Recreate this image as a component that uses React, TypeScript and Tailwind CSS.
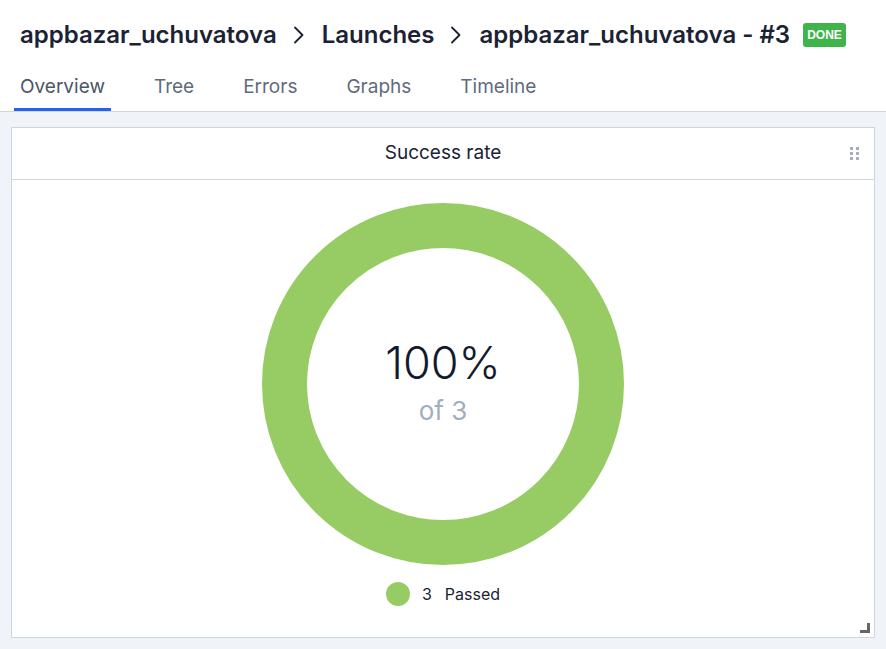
import React from 'react';

const tabs = ['Overview', 'Tree', 'Errors', 'Graphs', 'Timeline'];

function Chevron() {
  return (
    <svg width="12" height="18" viewBox="0 0 12 18" fill="none" stroke="#1b2233" strokeWidth="1.8" strokeLinecap="round" strokeLinejoin="round" className="ml-[16px] mr-[17px]">
      <path d="M2 1.5l7.5 7.5-7.5 7.5" />
    </svg>
  );
}

function Donut() {
  // ring between r=136 and r=181
  return (
    <svg width="364" height="364" viewBox="0 0 364 364">
      <circle cx="182" cy="182" r="158.5" fill="none" stroke="#97cc64" strokeWidth="45" />
    </svg>
  );
}

export default function App() {
  return (
    <div className="w-[886px] h-[649px] bg-[#f0f3f8] flex flex-col font-['Inter',sans-serif] overflow-hidden">
      {/* Header */}
      <header className="bg-white border-b border-[#cfd6e0]">
        <div className="flex items-center h-[67px] pl-5 pt-[2px] text-[24px] font-semibold text-[#1b2233]">
          <span>appbazar_uchuvatova</span>
          <Chevron />
          <span>Launches</span>
          <Chevron />
          <span>appbazar_uchuvatova - #3</span>
          <span className="ml-[13px] bg-[#3fb44a] text-white text-[12px] font-['Liberation_Sans',sans-serif] font-bold leading-[24px] h-[24px] px-[4px] rounded-[3px]">DONE</span>
        </div>
        <nav className="flex gap-[37px] pl-[14px]">
          {tabs.map((t, i) => (
            <div
              key={t}
              className={`px-[6px] h-[44px] flex items-start pt-[6px] text-[19px] border-b-[3px] ${
                i === 0 ? 'border-[#2563eb] text-[#4a5568]' : 'border-transparent text-[#5f6b7d]'
              }`}
            >
              {t}
            </div>
          ))}
        </nav>
      </header>

      {/* Widget */}
      <div className="px-[11px] pt-[15px]">
        <div className="bg-white border border-[#cdd5e0] h-[511px] flex flex-col relative">
          <div className="h-[52px] border-b border-[#cdd5e0] flex items-center justify-center relative">
            <span className="text-[19px] text-[#1b2233]">Success rate</span>
            <div className="absolute right-[15px] top-[19px] grid grid-cols-2 gap-x-[3px] gap-y-[2px]">
              {[0, 1, 2, 3, 4, 5].map((d) => (
                <span key={d} className="w-[3px] h-[3px] bg-[#a3aec0]" />
              ))}
            </div>
          </div>
          <div className="flex flex-col items-center pt-[22px]">
            <div className="relative w-[364px] h-[364px]">
              <Donut />
              <div className="absolute inset-0 flex flex-col items-center justify-center pb-[6px]">
                <span className="text-[45px] font-light leading-[52px] text-[#141a2e]">100%</span>
                <span className="text-[26px] leading-[30px] mt-[7px] text-[#a0aec0]">of 3</span>
              </div>
            </div>
            <div className="flex items-center mt-[16px] text-[16px] text-[#1b2233]">
              <span className="w-[24px] h-[24px] rounded-full bg-[#97cc64]" />
              <span className="ml-[12px]">3</span>
              <span className="ml-[13px]">Passed</span>
            </div>
          </div>
          <div className="absolute right-[4px] bottom-[4px] w-[10px] h-[10px] border-r-[3px] border-b-[3px] border-[#666]" />
        </div>
      </div>
    </div>
  );
}
